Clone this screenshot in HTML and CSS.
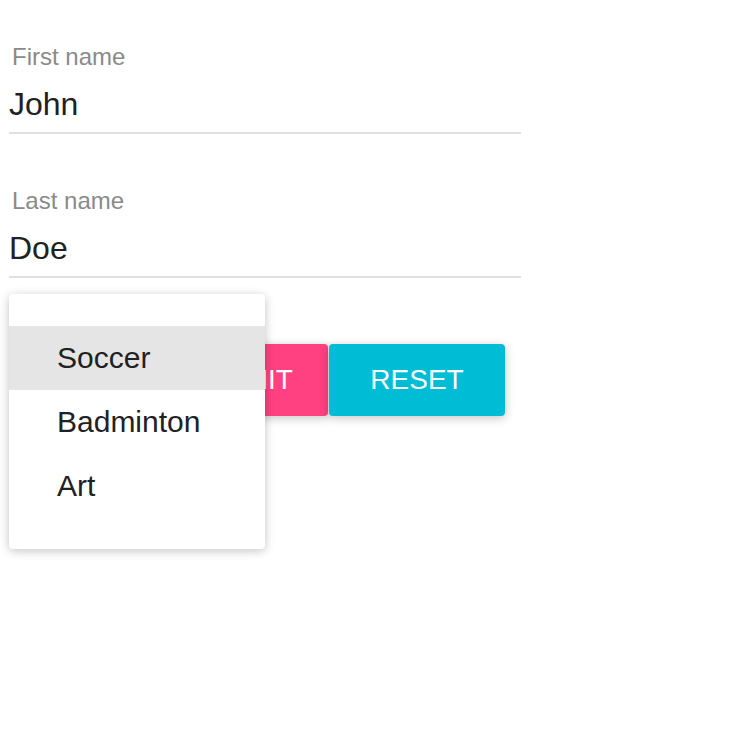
FILE: index.html
```html
<!DOCTYPE html>
<html>
<head>
<meta charset="utf-8">
<link rel="stylesheet" href="styles.css">
</head>
<body>
<form class="form">
  <div class="field field-first">
    <label class="field-label">First name</label>
    <div class="field-input">John</div>
  </div>
  <div class="field">
    <label class="field-label">Last name</label>
    <div class="field-input">Doe</div>
  </div>
  <div class="actions">
    <button type="button" class="btn btn-submit">SUBMIT</button>
    <button type="button" class="btn btn-reset">RESET</button>
  </div>
</form>
<div class="menu">
  <div class="menu-item menu-item-active">Soccer</div>
  <div class="menu-item">Badminton</div>
  <div class="menu-item">Art</div>
</div>
</body>
</html>
```

FILE: styles.css
```css
html, body {
  margin: 0;
  padding: 0;
  background: #ffffff;
}

body {
  font-family: "Liberation Sans", Arial, Helvetica, sans-serif;
  position: relative;
  width: 751px;
  height: 753px;
  overflow: hidden;
}

.form {
  padding: 40px 0 0 9px;
}

.field {
  width: 512px;
  margin-top: 50px;
  display: flex;
  flex-direction: column;
  border-bottom: 2px solid #e0e0e0;
  padding-bottom: 4px;
}

.field-first {
  margin-top: 0;
}

.field-label {
  font-size: 24px;
  line-height: 30px;
  padding-top: 2px;
  color: #8a8a8a;
  padding-left: 3px;
}

.field-input {
  margin-top: 8px;
  font-size: 32px;
  line-height: 48px;
  color: #212121;
}

.actions {
  display: flex;
  gap: 1px;
  margin-top: 66px;
  margin-left: 143px;
}

.btn {
  width: 176px;
  height: 72px;
  border: none;
  border-radius: 4px;
  padding: 0;
  font-family: "Liberation Sans", Arial, Helvetica, sans-serif;
  font-size: 28px;
  line-height: 72px;
  color: #ffffff;
  box-shadow: 0 2px 12px rgba(0, 0, 0, 0.12), 0 2px 8px rgba(0, 0, 0, 0.12);
}

.btn-submit {
  background: #ff4081;
}

.btn-reset {
  background: #00bcd4;
}

.menu {
  position: absolute;
  left: 9px;
  top: 294px;
  width: 256px;
  padding: 32px 0 31px;
  background: #ffffff;
  border-radius: 4px;
  box-shadow: 0 2px 12px rgba(0, 0, 0, 0.12), 0 2px 8px rgba(0, 0, 0, 0.12);
}

.menu-item {
  height: 64px;
  line-height: 64px;
  padding-left: 48px;
  font-size: 30px;
  color: #212121;
}

.menu-item-active {
  background: #e5e5e5;
}
```
